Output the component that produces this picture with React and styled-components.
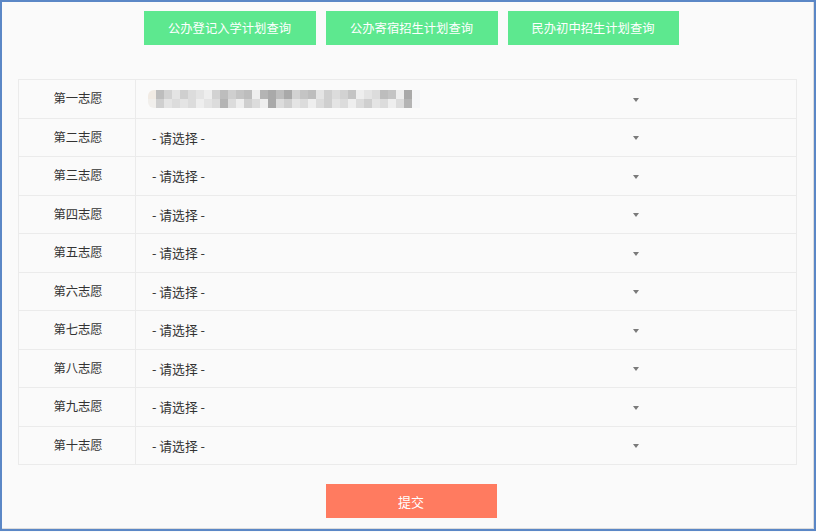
import React from "react";
import styled, { createGlobalStyle } from "styled-components";

const Global = createGlobalStyle`
  html, body { margin: 0; padding: 0; background: #fafafa; }
  body { font-family: "Noto Sans CJK SC", "Noto Sans", sans-serif; }
`;

const Frame = styled.div`
  box-sizing: border-box;
  width: 816px;
  height: 531px;
  border: 2px solid #5b87c6;
  background: #fafafa;
`;

const Inner = styled.div`
  box-sizing: border-box;
  height: 100%;
  border-right: 1px solid #dcdcdc;
  border-bottom: 1px solid #dcdcdc;
  padding: 9px 16px 0 16px;
  display: flex;
  flex-direction: column;
  align-items: center;
`;

const TopBar = styled.div`
  display: flex;
  gap: 10px;
  height: 34px;
  margin-left: 7px;
`;

const Btn = styled.button`
  box-sizing: border-box;
  width: ${(p) => p.$w || 172}px;
  height: 34px;
  border: none;
  margin: 0;
  padding: 0;
  background: ${(p) => p.$bg};
  color: #fff;
  font-family: "Noto Sans CJK SC", sans-serif;
  font-size: ${(p) => p.$fs || 12.3}px;
  cursor: pointer;
`;

const Table = styled.div`
  box-sizing: border-box;
  margin-top: 34px;
  width: 779px;
  border: 1px solid #ebebeb;
  border-bottom: none;
  align-self: flex-start;
`;

const Row = styled.div`
  display: grid;
  grid-template-columns: 117px 1fr;
  height: 38.5px;
  box-sizing: border-box;
  border-bottom: 1px solid #ebebeb;
`;

const Label = styled.div`
  display: flex;
  align-items: center;
  justify-content: center;
  border-right: 1px solid #ebebeb;
  font-size: 12.3px;
  color: #333;
  padding-bottom: 1px;
  padding-left: 2px;
`;

const SelectCell = styled.div`
  display: flex;
  align-items: center;
  padding-left: 16px;
`;

const SelectBox = styled.div`
  width: 487px;
  display: flex;
  align-items: center;
  justify-content: space-between;
  font-size: 12.8px;
  color: #333;
`;

const Arrow = styled.span`
  width: 0;
  height: 0;
  border-left: 3px solid transparent;
  border-right: 3px solid transparent;
  border-top: 4px solid #7a7a7a;
  margin-top: 2px;
`;

const Blur = styled.div`
  display: grid;
  grid-template-columns: repeat(34, 8px);
  grid-template-rows: 9px 9px;
  margin-left: -4px;
  filter: blur(0.6px);
  border-radius: 6px 0 0 6px;
  overflow: hidden;
`;

const Cell = styled.div`
  background: ${(p) => p.$c};
`;

const SubmitRow = styled.div`
  margin-top: 19px;
  margin-left: 7px;
  display: flex;
  justify-content: center;
`;

const greys = ["#efeeec", "#bdbdbd", "#d2d2d2", "#e4e4e4", "#a9a9a9", "#cfcfcf", "#dcdcdc", "#c4c4c4", "#eeeeee", "#b4b4b4"];
const top = [0,1,2,3,5,6,3,8,2,1,5,7,1,8,9,4,1,4,2,7,1,3,5,6,2,7,8,3,6,1,7,8,4,8];
const bot = [0,5,3,6,3,6,8,3,6,9,6,8,5,6,8,4,6,5,3,6,8,6,5,3,6,8,6,5,3,6,8,6,9,8];
const blank = new Set([33]);

const names = ["第一志愿","第二志愿","第三志愿","第四志愿","第五志愿","第六志愿","第七志愿","第八志愿","第九志愿","第十志愿"];

export default function App() {
  return (
    <>
      <Global />
      <Frame>
        <Inner>
          <TopBar>
            <Btn $bg="#5de88f">公办登记入学计划查询</Btn>
            <Btn $bg="#5de88f">公办寄宿招生计划查询</Btn>
            <Btn $bg="#5de88f" $w={171}>民办初中招生计划查询</Btn>
          </TopBar>
          <Table>
            {names.map((n, i) => (
              <Row key={n}>
                <Label>{n}</Label>
                <SelectCell>
                  <SelectBox>
                    {i === 0 ? (
                      <Blur>
                        {top.map((c, k) => (
                          <Cell key={"t" + k} $c={k === 0 ? "#f1ebe4" : blank.has(k) ? "#f5f6f8" : greys[c]} />
                        ))}
                        {bot.map((c, k) => (
                          <Cell key={"b" + k} $c={k === 0 ? "#f1efec" : blank.has(k) ? "#f5f6f8" : greys[c]} />
                        ))}
                      </Blur>
                    ) : (
                      <span>- 请选择 -</span>
                    )}
                    <Arrow />
                  </SelectBox>
                </SelectCell>
              </Row>
            ))}
          </Table>
          <SubmitRow>
            <Btn $bg="#ff7b60" $w={171} $fs={13}>提交</Btn>
          </SubmitRow>
        </Inner>
      </Frame>
    </>
  );
}
